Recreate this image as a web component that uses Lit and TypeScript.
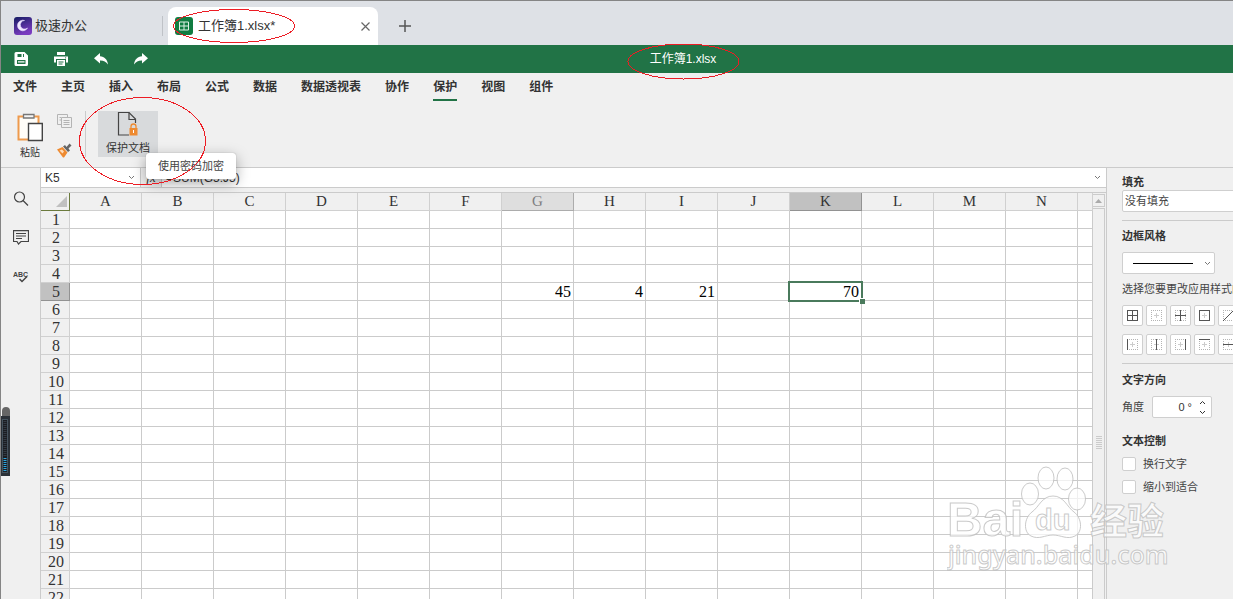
import { LitElement, html, svg, css } from "lit";
import { customElement, property, state } from "lit/decorators.js";
import { classMap } from "lit/directives/class-map.js";

const MENU = ["文件", "主页", "插入", "布局", "公式", "数据", "数据透视表", "协作", "保护", "视图", "组件"];
const COLUMNS = "ABCDEFGHIJKLMN".split("");
const ROWS = Array.from({ length: 22 }, (_, i) => i + 1);
const VALUES: Record<string, string> = { G5: "45", H5: "4", I5: "21", K5: "70" };

const chevron = (up = false) => html`<svg width="7" height="5" viewBox="0 0 7 5" aria-hidden="true">
  <path d=${up ? "M1 4L3.5 1.5L6 4" : "M1 1L3.5 3.5L6 1"} fill="none" stroke="currentColor" /></svg>`;

@customElement("sheet-grid")
class SheetGrid extends LitElement {
  @property() active = "K5";

  static styles = css`
    :host { display: block; flex: 1; min-width: 0; overflow: hidden; background: #fff; }
    table {
      width: 100%; table-layout: fixed; border-collapse: separate; border-spacing: 0;
      font: 16px/17px "Liberation Serif", "Noto Sans CJK SC", serif; color: #333;
    }
    .heads { width: 29px; }
    .col { width: 72px; }
    th, td {
      box-sizing: border-box; height: 18px; padding: 0; white-space: nowrap;
      border-right: 1px solid #cbcbcb; border-bottom: 1px solid #cbcbcb;
    }
    th { background: #f0f0f0; font-weight: 400; text-align: center; border-color: #d0d0d0; }
    thead th { font-size: 15px; }
    tbody th { padding-left: 2px; }
    td { text-align: right; padding-right: 2px; color: #000; }
    .corner { border-color: #6b7a3d; }
    .corner svg { display: block; margin-left: 15px; }
    .hover { background: #dedede; border-color: #acacac; color: #7d7d80; }
    .on { background: #c1c1c1; border-color: #929292; }
    .active { position: relative; }
    .active::before {
      content: ""; position: absolute; inset: -2px -2px -2px -2px; border: 2px solid #4a7a5c;
    }
    .active::after {
      content: ""; position: absolute; right: -4px; bottom: -4px; width: 5px; height: 5px;
      background: #4a7a5c; border: 1px solid #fff; border-width: 1px 0 0 1px;
    }
  `;

  render() {
    const col = this.active[0];
    const row = Number(this.active.slice(1));
    return html`<table>
      <colgroup>
        <col class="heads" />
        ${COLUMNS.map(() => html`<col class="col" />`)}
        <col />
      </colgroup>
      <thead><tr>
        <th class="corner"><svg width="11" height="11" viewBox="0 0 11 11"><path d="M11 0V11H0Z" fill="#c0c0c0" /></svg></th>
        ${COLUMNS.map((c) => html`<th scope="col" class=${classMap({ on: c === col, hover: c === "G" })}>${c}</th>`)}
        <th></th>
      </tr></thead>
      <tbody>
        ${ROWS.map((r) => html`<tr>
          <th scope="row" class=${classMap({ on: r === row })}>${r}</th>
          ${COLUMNS.map((c) => html`<td
            class=${classMap({ active: c + r === this.active })}
            @click=${() => { this.active = c + r; }}>${VALUES[c + r] ?? ""}</td>`)}
          <td></td>
        </tr>`)}
      </tbody>
    </table>`;
  }
}

type Edge = "l" | "r" | "t" | "b" | "v" | "h" | "d";
const EDGE_PATHS: Record<Edge, string> = {
  l: "M0.5 0V11", r: "M10.5 0V11", t: "M0 0.5H11", b: "M0 10.5H11", v: "M5.5 0V11", h: "M0 5.5H11", d: "M0 11L11 0",
};
const BORDERS: { name: string; edges: string }[][] = [
  [
    { name: "所有框线", edges: "lrtbvh" }, { name: "无框线", edges: "" }, { name: "内部框线", edges: "vh" },
    { name: "外部框线", edges: "lrtb" }, { name: "斜线", edges: "d" },
  ],
  [
    { name: "左框线", edges: "l" }, { name: "内部垂直框线", edges: "v" }, { name: "右框线", edges: "r" },
    { name: "上框线", edges: "t" }, { name: "内部水平框线", edges: "h" },
  ],
];

@customElement("cell-settings")
class CellSettings extends LitElement {
  static styles = css`
    :host {
      display: block; flex: 0 0 127px; box-sizing: border-box; overflow: hidden;
      padding: 6px 0 0 15px; border-left: 1px solid #cbcbcb; background: #f0f0f0;
      font: 11px/16px "Liberation Sans", "Noto Sans CJK SC", sans-serif; color: #444; white-space: nowrap;
    }
    h2 { margin: 0; font-size: 11px; line-height: 16px; font-weight: 700; color: #333; }
    .part { width: 180px; border-bottom: 1px solid #cbcbcb; }
    .part:last-child { border: 0; }
    select, .num {
      box-sizing: border-box; height: 22px; border: 1px solid #cfcfcf; border-radius: 2px;
      background: #fff; font: inherit; color: #444;
    }
    select { appearance: none; padding: 0 2px; }
    .fill { display: block; width: 180px; margin-bottom: 8px; }
    .borders { padding-top: 7px; }
    .line { display: grid; width: 93px; margin: 8px 0 7px; align-items: center; }
    .line > * { grid-area: 1 / 1; }
    .line svg { justify-self: end; margin-right: 4px; pointer-events: none; color: #777; }
    .line .sample { height: 1px; width: 60px; margin-left: 11px; background: #000; pointer-events: none; }
    .set { display: flex; gap: 3px; margin: 8px 0; }
    .set button {
      display: grid; place-items: center; width: 21px; height: 21px; padding: 0;
      border: 1px solid #cfcfcf; border-radius: 2px; background: #fff;
    }
    .direction { padding: 8px 0 7px; border: 0; }
    .angle { display: flex; align-items: center; gap: 8px; margin: 8px 0; }
    .num { display: flex; align-items: center; width: 60px; padding: 0 5px; }
    .num input {
      flex: 1; width: 0; padding: 0; border: 0; outline: 0; background: none; text-align: right;
      font: inherit; color: #333;
    }
    .steps { display: grid; gap: 5px; margin-left: 7px; }
    .steps button { display: block; padding: 0; border: 0; background: none; color: #333; line-height: 0; }
    .steps svg { display: block; }
    .check { display: flex; align-items: center; gap: 7px; margin-top: 7px; }
    .check input {
      appearance: none; box-sizing: border-box; width: 14px; height: 14px; margin: 0; border: 1px solid #cfcfcf;
      border-radius: 2px; background: #fff;
    }
    .check input:checked { background: #217346; }
  `;

  private borderIcon(edges: string) {
    return html`<svg width="11" height="11" viewBox="0 0 11 11" shape-rendering="crispEdges" aria-hidden="true">
      <path d="M0 .5H11M0 10.5H11M.5 0V11M10.5 0V11" stroke="#b4b4b4" stroke-dasharray="1 1" fill="none" />
      ${edges === "d" ? "" : svg`<path d="M3 5.5H8M5.5 3V8" stroke="#ccc" />`}
      ${edges.split("").map((e) => svg`<path d=${EDGE_PATHS[e as Edge]} stroke="#555" shape-rendering=${e === "d" ? "auto" : "crispEdges"} />`)}
    </svg>`;
  }

  render() {
    return html`
      <div class="part">
        <h2><label for="fill">填充</label></h2>
        <select id="fill" class="fill"><option>没有填充</option></select>
      </div>
      <div class="part borders">
        <h2><label for="line">边框风格</label></h2>
        <div class="line">
          <select id="line"><option label=" "></option></select>
          <span class="sample"></span>${chevron()}
        </div>
        <div>选择您要更改应用样式的边框</div>
        ${BORDERS.map((set) => html`<div class="set">
          ${set.map((b) => html`<button aria-label=${b.name}>${this.borderIcon(b.edges)}</button>`)}
        </div>`)}
      </div>
      <div class="part direction">
        <h2>文字方向</h2>
        <div class="angle">
          <label for="angle">角度</label>
          <div class="num">
            <input id="angle" value="0 °" />
            <div class="steps"><button aria-label="增加">${chevron(true)}</button><button aria-label="减少">${chevron()}</button></div>
          </div>
        </div>
      </div>
      <div class="part">
        <h2>文本控制</h2>
        <label class="check"><input type="checkbox" />换行文字</label>
        <label class="check"><input type="checkbox" />缩小到适合</label>
      </div>`;
  }
}

@customElement("app-root")
class AppRoot extends LitElement {
  @state() private tab = "保护";

  static styles = css`
    :host {
      display: flex; flex-direction: column; position: relative; box-sizing: border-box; height: 100vh;
      overflow: hidden; border: 1px solid #858585; border-width: 1px 0 0 1px; background: #f0f0f0;
      font: 12px/16px "Liberation Sans", "Noto Sans CJK SC", sans-serif; color: #333;
    }
    button { font: inherit; color: inherit; padding: 0; border: 0; background: none; }
    svg { display: block; }

    .windowbar { display: flex; align-items: flex-end; height: 44px; background: #dee1e6; font-size: 13px; }
    .home, .file { display: flex; align-items: center; height: 38px; box-sizing: border-box; }
    .home { gap: 3px; width: 161px; padding-left: 12px; }
    .divider { width: 1px; height: 20px; margin: 0 5px 9px 0; background: #bfc2c7; }
    .file { gap: 5px; width: 210px; padding: 0 8px 0 7px; border-radius: 8px 8px 0 0; background: #fff; }
    .file span { flex: 1; }
    .add { margin: 0 0 13px 21px; }

    .titlebar { display: grid; grid-template-columns: 1fr auto 1fr; align-items: center; height: 28px; background: #217346; color: #fff; }
    .quick { display: flex; gap: 24px; padding-left: 12px; }
    .name { padding-left: 132px; }

    .menu { display: flex; gap: 24px; padding: 6px 12px 0; }
    .menu button { height: 22px; line-height: 16px; padding-bottom: 4px; border-bottom: 2px solid transparent; font-weight: 700; color: #333; }
    .menu .current { border-color: #217346; }

    .ribbon { display: flex; padding: 10px 0; height: 46px; border-bottom: 1px solid #cbcbcb; }
    .paste { display: grid; justify-items: center; align-content: start; gap: 4px; width: 26px; margin: 2px 13px 0 16px; font-size: 10px; line-height: 14px; white-space: nowrap; }
    .stack { display: flex; flex-direction: column; justify-content: space-between; padding: 3px 13px 0 1px; height: 44px; }
    .sep { width: 1px; background: #cbcbcb; margin-right: 12px; }
    .protect { display: grid; justify-items: center; align-content: start; gap: 4px; width: 60px; background: #d8dadc; font-size: 11px; line-height: 16px; }

    .body { display: flex; flex: 1; min-height: 0; }
    .rail { display: flex; flex-direction: column; align-items: center; gap: 22px; width: 39px; padding-top: 22px; border-right: 1px solid #cbcbcb; }
    .rail button { height: 17px; }
    .rail .abc { font: 700 7px/8px "Liberation Sans", sans-serif; }
    .work { display: flex; flex-direction: column; flex: 1; min-width: 0; }
    .formula { display: flex; height: 19px; border-bottom: 1px solid #cbcbcb; background: #fff; }
    .formula input { min-width: 0; box-sizing: border-box; padding: 0 4px; border: 0; outline: 0; font: inherit; color: #333; background: #fff; }
    .cellname { flex: 0 0 82px; }
    .drop { width: 17px; display: grid; place-items: center; color: #777; }
    .fx { width: 22px; border: 1px solid #cbcbcb; border-width: 0 1px; background: #f0f0f0; text-align: center; font: italic 13px/19px "Liberation Serif", serif; }
    .value { flex: 1; }
    .sheet { display: flex; flex: 1; min-height: 0; margin-top: 4px; border-top: 1px solid #cbcbcb; }
    .scroll { display: flex; flex-direction: column; width: 12px; padding: 1px 1px 0 0; gap: 1px; }
    .scroll .up { display: grid; place-items: center; height: 13px; box-sizing: border-box; border: 1px solid #cbcbcb; border-left: 0; }
    .thumb { display: grid; place-items: center; flex: 1; padding-top: 77px; border: 1px solid #cbcbcb; border-width: 1px 1px 0 0; }

    .tip {
      position: absolute; left: 145px; top: 152px; padding: 5px 12px; border-radius: 3px;
      background: #fff; font-size: 11px; line-height: 16px; color: #444; box-shadow: 0 0 1px #888, 0 4px 14px rgba(0, 0, 0, 0.35);
    }
    .gauge { position: absolute; left: 0; top: 406px; }
    .marks { position: absolute; left: 0; top: 0; pointer-events: none; }
    .watermark { position: absolute; right: 62px; bottom: 24px; pointer-events: none; }
    .watermark .big { font: 700 49px "Liberation Sans", sans-serif; }
    .watermark .du { font: 700 29px "Liberation Sans", sans-serif; }
    .watermark .cn { font: 700 37px "Noto Sans CJK SC", sans-serif; }
    .watermark .url { font: 500 25px "Noto Sans", sans-serif; }
  `;

  render() {
    return html`
      <header class="windowbar">
        <div class="home">
          <svg width="19" height="18" viewBox="0 0 19 18" aria-hidden="true">
            <defs><linearGradient id="g" x1="0" y1="0" x2="0.4" y2="1"><stop stop-color="#151c62" /><stop offset="1" stop-color="#7a3cc0" /></linearGradient></defs>
            <rect x="1" width="18" height="18" rx="3" fill="url(#g)" />
            <path d="M11.500 3.500A5.300 5.300 0 1 0 14.500 11A4.300 4.300 0 1 1 11.500 3.500Z" fill="#f0e8ff" stroke="#e8dcff" stroke-width=".6" />
          </svg>
          <span>极速办公</span>
        </div>
        <i class="divider"></i>
        <div class="file">
          <svg width="18" height="18" viewBox="0 0 18 18" aria-hidden="true">
            <rect width="18" height="18" rx="3" fill="#117c41" />
            <path d="M4.5 5H13.5V13H4.5ZM9 5V13M4.5 9H13.5" fill="none" stroke="#dff0e5" />
          </svg>
          <span>工作簿1.xlsx*</span>
          <button aria-label="关闭"><svg width="9" height="9" viewBox="0 0 9 9"><path d="M.5 .5L8.5 8.5M8.5 .5L.5 8.5" stroke="#666" stroke-width="1.2" /></svg></button>
        </div>
        <button class="add" aria-label="新建"><svg width="12" height="12" viewBox="0 0 12 12"><path d="M6 0V12M0 6H12" stroke="#555" stroke-width="1.5" /></svg></button>
      </header>

      <div class="titlebar">
        <div class="quick">
          <button aria-label="保存"><svg width="16" height="16" viewBox="0 0 16 16"><path d="M3 1H11.5L15 4.500V13.500A1.500 1.500 0 0 1 13.500 15H3A1.500 1.500 0 0 1 1.500 13.500V2.500A1.500 1.500 0 0 1 3 1ZM4.500 3V6H11V3ZM4 9V13H12.500V9Z" fill="#fff" fill-rule="evenodd" /><path d="M8.500 3H10V6H8.500ZM5 10.300H11.500V11.500H5Z" fill="#fff" /></svg></button>
          <button aria-label="打印"><svg width="16" height="16" viewBox="0 0 16 16"><path d="M4 1H12V4H4ZM1 5.500H15V11.500H13V8H3V11.500H1Z" fill="#fff" /><path d="M4 9H12V15H4Z" fill="#fff" /><path d="M5.500 11H10.500M5.500 13H9.500" stroke="#217346" /><circle cx="12.600" cy="6.800" r=".6" fill="#217346" /></svg></button>
          <button aria-label="撤销"><svg width="16" height="16" viewBox="0 0 16 16"><path d="M7 2V5.200C11.500 5.500 14.500 8.500 15 13.500C13 10.500 10.500 9.400 7 9.500V12.500L1 7.200Z" fill="#fff" /></svg></button>
          <button aria-label="重做"><svg width="16" height="16" viewBox="0 0 16 16"><path d="M9 2V5.200C4.500 5.500 1.500 8.500 1 13.500C3 10.500 5.500 9.400 9 9.500V12.500L15 7.200Z" fill="#fff" /></svg></button>
        </div>
        <span class="name">工作簿1.xlsx</span>
      </div>

      <nav class="menu">
        ${MENU.map((m) => html`<button class=${classMap({ current: m === this.tab })} @click=${() => { this.tab = m; }}>${m}</button>`)}
      </nav>

      <div class="ribbon">
        <button class="paste">
          <svg width="26" height="29" viewBox="0 0 26 29" aria-hidden="true">
            <path d="M1.500 3.500H21.500V26.500H1.500Z" fill="#fffdf8" stroke="#ee9a4d" stroke-width="2" />
            <path d="M6.500 1.500H17V5H6.500Z" fill="#f5f5f5" stroke="#777" stroke-width="1.300" />
            <path d="M11.500 10.500H25.300V27.500H11.500Z" fill="#fff" stroke="#444" stroke-width="1.400" />
          </svg>
          粘贴
        </button>
        <div class="stack">
          <button aria-label="复制"><svg width="15" height="15" viewBox="0 0 15 15"><path d="M4 10.500H.5V.5H10.500V3.500M2.500 3.500H4M2.500 6H4M4.500 3.500H14.500V13.500H4.500ZM6.500 6.500H12.500M6.500 8.500H12.500M6.500 10.500H12.500" fill="none" stroke="#b4b4b4" /></svg></button>
          <button aria-label="格式刷"><svg width="15" height="15" viewBox="0 0 15 15"><path d="M0 6.500L5.500 4L10.500 9.500L7 14.500H6Z" fill="#ee8a30" /><path d="M2.500 7.500L5 6.500L7 8.500L5.500 10.500Z" fill="#ffdcb8" /><path d="M6 3.500L8 2L9.500 4L12.500 .5L14.500 2.500L11.500 5.500L13 7.500L11 9Z" fill="#666" /></svg></button>
        </div>
        <i class="sep"></i>
        <button class="protect">
          <svg width="22" height="25" viewBox="0 0 22 25" aria-hidden="true">
            <path d="M12 24H1.500V1.500H12L18.500 8V12" fill="none" stroke="#444" stroke-width="1.200" />
            <path d="M12 1.500V8.500H18.500" fill="none" stroke="#444" stroke-width="1.200" />
            <path d="M12.500 17H20.500V24.500H12.500Z" fill="#ee8a30" />
            <path d="M14 17V15.500A2.500 2.500 0 0 1 19 15.500V17" fill="none" stroke="#ee8a30" stroke-width="1.300" />
            <path d="M16.500 19V22" stroke="#fff" />
          </svg>
          保护文档
        </button>
      </div>

      <div class="body">
        <aside class="rail">
          <button aria-label="查找"><svg width="16" height="16" viewBox="0 0 16 16"><circle cx="6.500" cy="6" r="5" fill="none" stroke="#444" stroke-width="1.200" /><path d="M10 9.500L15 14.500" stroke="#444" stroke-width="1.300" /></svg></button>
          <button aria-label="批注"><svg width="16" height="16" viewBox="0 0 16 16"><path d="M.5 .6H15.500V11.500H8L5.500 14L4 11.500H.5Z" fill="none" stroke="#444" stroke-width="1.200" /><path d="M3 3.500H13M3 6H13M3 8.500H9" stroke="#444" /></svg></button>
          <button aria-label="拼写检查" class="abc"><svg width="16" height="16" viewBox="0 0 16 16"><text x="0" y="8" fill="#444">ABC</text><path d="M6.500 10L9 12.500L14 7.500" fill="none" stroke="#444" stroke-width="1.500" /></svg></button>
        </aside>
        <main class="work">
          <div class="formula">
            <input class="cellname" aria-label="名称框" value="K5" />
            <button class="drop" aria-label="名称列表">${chevron()}</button>
            <button class="fx" aria-label="插入函数">fx</button>
            <input class="value" aria-label="公式" value="=SUM(G5:J5)" />
            <button class="drop" aria-label="展开编辑栏">${chevron()}</button>
          </div>
          <div class="sheet">
            <sheet-grid></sheet-grid>
            <div class="scroll">
              <button class="up" aria-label="向上滚动"><svg width="7" height="4" viewBox="0 0 7 4"><path d="M0 4L3.500 0L7 4Z" fill="#aaa" /></svg></button>
              <div class="thumb"><svg width="6" height="14" viewBox="0 0 6 14"><path d="M0 .5H6M0 2.500H6M0 4.500H6M0 6.500H6M0 8.500H6M0 10.500H6M0 12.500H6" stroke="#cbcbcb" /></svg></div>
            </div>
          </div>
        </main>
        <cell-settings></cell-settings>
      </div>

      <div class="tip" role="tooltip">使用密码加密</div>

      <svg class="gauge" width="9" height="70" viewBox="0 0 9 70" aria-hidden="true">
        <path d="M1 10V4A4 4 0 0 1 9 4V10Z" fill="#666" />
        <rect y="9" width="9" height="60" fill="#2b3138" />
        <rect x="1.500" y="12.500" width="5" height="53" fill="#1a1d22" stroke="#46545f" />
        <path d="M4 14V50" stroke="#343b44" stroke-width="3" stroke-dasharray="1 1" />
        <path d="M4 51V65" stroke="#2ba5e0" stroke-width="3" stroke-dasharray="1 1" />
      </svg>

      <svg class="watermark" width="224" height="110" viewBox="0 0 224 110" aria-hidden="true">
        <g fill="#fff" fill-opacity="0.7" stroke="#bdbdbd" stroke-opacity="0.8" stroke-width="1">
          <ellipse cx="83" cy="29" rx="8.500" ry="11" /><ellipse cx="99" cy="13" rx="8" ry="11" />
          <ellipse cx="118" cy="14" rx="8" ry="11" /><ellipse cx="130" cy="34" rx="8.500" ry="11" />
          <path d="M106 31C95 31 92 42 85 47C77 53 76 67 84 71C92 75 98 70 106 70C114 70 120 75 128 71C136 67 135 53 127 47C120 42 117 31 106 31Z" />
          <text class="big" x="0" y="71">Bai</text>
          <text class="cn" x="143" y="70">经验</text>
          <text class="url" x="1" y="99">jingyan.baidu.com</text>
          <text class="du" x="88" y="65">du</text>
        </g>
      </svg>

      <svg class="marks" width="760" height="200" viewBox="1 1 760 200" fill="none" stroke="#ed1c24" shape-rendering="crispEdges" aria-hidden="true">
        <ellipse cx="234" cy="26" rx="60.500" ry="16.500" />
        <ellipse cx="683.500" cy="61.500" rx="55.500" ry="17.500" />
        <ellipse cx="142.500" cy="141" rx="63" ry="43.500" />
      </svg>
    `;
  }
}
